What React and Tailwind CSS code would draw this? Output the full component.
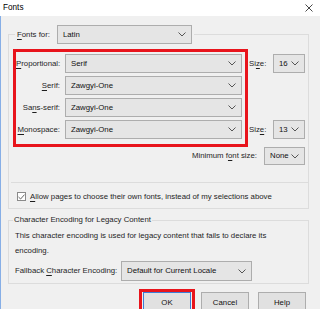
import React from 'react';

function Chevron() {
  return (
    <svg width="8" height="5" viewBox="0 0 8 5" className="shrink-0">
      <path d="M0.5 0.5 L4 4 L7.5 0.5" fill="none" stroke="#555" strokeWidth="1" />
    </svg>
  );
}

function Select({ value, className = '' }) {
  return (
    <div
      className={`flex items-center justify-between border border-[#adadad] bg-[#e5e5e5] pl-[5px] pr-[5px] text-[#111] ${className}`}
    >
      <span className="whitespace-nowrap">{value}</span>
      <Chevron />
    </div>
  );
}

function Key({ children }) {
  return <span className="underline underline-offset-[2px]">{children}</span>;
}

function Row({ label, value }) {
  return (
    <div className="flex h-[19px] items-center">
      <span className="w-[44px] text-right whitespace-nowrap">{label}</span>
      <Select value={value} className="ml-[5px] h-[19px] w-[177px]" />
    </div>
  );
}

function Button({ children, className = '' }) {
  return (
    <div
      className={`flex h-[22px] w-[48px] items-center justify-center border bg-[#e1e1e1] text-[#111] ${className}`}
    >
      {children}
    </div>
  );
}

export default function App() {
  return (
    <div className="flex h-[309px] w-[320px] flex-col overflow-hidden bg-[#f0f0f0] font-['Liberation_Sans',Arial,sans-serif] text-[7.8px] leading-none text-[#1e1e1e]">
      {/* title bar */}
      <div className="flex h-[16px] shrink-0 items-center justify-between bg-white pl-[3px] pr-[7px]">
        <span className="text-[8.2px] text-black">Fonts</span>
        <svg width="8" height="8" viewBox="0 0 8 8">
          <path d="M0.5 0.5 L7.5 7.5 M7.5 0.5 L0.5 7.5" stroke="#333" strokeWidth="0.9" />
        </svg>
      </div>

      <div className="flex-1 border-l border-[#86aee6] pl-[7px] pr-[11px] pt-[9px]">
        {/* Fonts for group */}
        <fieldset className="border border-[#dcdcdc]">
          <legend className="ml-[6px] flex items-center px-[2px]">
            <span className="whitespace-nowrap">
              <Key>F</Key>onts for:
            </span>
            <Select value="Latin" className="ml-[7px] h-[19px] w-[135px]" />
          </legend>

          <div className="ml-[4px] mr-[3px] mt-[5px] flex">
            <div className="flex w-[235px] flex-col gap-[3px] border-[3px] border-[#e8141c] pb-[5px] pr-[3px] pt-[2px]">
              <Row label={<><Key>P</Key>roportional:</>} value="Serif" />
              <Row label={<><Key>S</Key>erif:</>} value="Zawgyi-One" />
              <Row label={<>Sa<Key>n</Key>s-serif:</>} value="Zawgyi-One" />
              <Row label={<><Key>M</Key>onospace:</>} value="Zawgyi-One" />
            </div>
            <div className="flex flex-1 flex-col pt-[5px]">
              <div className="flex h-[19px] items-center justify-between pl-[1px]">
                <span>
                  Si<Key>z</Key>e:
                </span>
                <Select value="16" className="h-[19px] w-[32px]" />
              </div>
              <div className="mt-[47px] flex h-[19px] items-center justify-between pl-[1px]">
                <span>
                  Siz<Key>e</Key>:
                </span>
                <Select value="13" className="h-[19px] w-[32px]" />
              </div>
            </div>
          </div>

          <div className="mr-[3px] flex items-center justify-end">
            <span className="whitespace-nowrap">
              Minimum f<Key>o</Key>nt size:
            </span>
            <Select value="None" className="ml-[7px] h-[18px] w-[41px]" />
          </div>

          <div className="ml-[2px] mt-[17px] h-px bg-[#dcdcdc]" />

          <div className="mb-[7px] ml-[8px] mt-[9px] flex items-center">
            <div className="flex h-[9px] w-[9px] items-center justify-center border border-[#8a8a8a] bg-white">
              <svg width="7" height="6" viewBox="0 0 7 6">
                <path d="M0.5 3 L2.6 5 L6.5 0.6" fill="none" stroke="#555" strokeWidth="0.9" />
              </svg>
            </div>
            <span className="ml-[4px] whitespace-nowrap">
              <Key>A</Key>llow pages to choose their own fonts, instead of my selections above
            </span>
          </div>
        </fieldset>

        {/* Character encoding group */}
        <fieldset className="mt-[5px] border border-[#dcdcdc]">
          <legend className="ml-[4px] px-[1px] leading-[12px]">Character Encoding for Legacy Content</legend>
          <div className="mt-[2px] pl-[6px] leading-[15px]">
            This character encoding is used for legacy content that fails to declare its
            <br />
            encoding.
          </div>
          <div className="mb-[2px] mt-[3px] flex items-center pl-[6px]">
            <span className="w-[106px] whitespace-nowrap">
              Fallback <Key>C</Key>haracter Encoding:
            </span>
            <Select value="Default for Current Locale" className="h-[20px] w-[131px]" />
          </div>
        </fieldset>

        {/* buttons */}
        <div className="mr-[3px] mt-[5px] flex items-start justify-end">
          <div className="border-[3px] border-[#e8141c] px-px">
            <Button className="border-[#3b7dd8]">OK</Button>
          </div>
          <Button className="ml-[6px] mt-[3px] border-[#adadad]">Cancel</Button>
          <Button className="ml-[9px] mt-[3px] border-[#adadad]">Help</Button>
        </div>
      </div>
    </div>
  );
}
